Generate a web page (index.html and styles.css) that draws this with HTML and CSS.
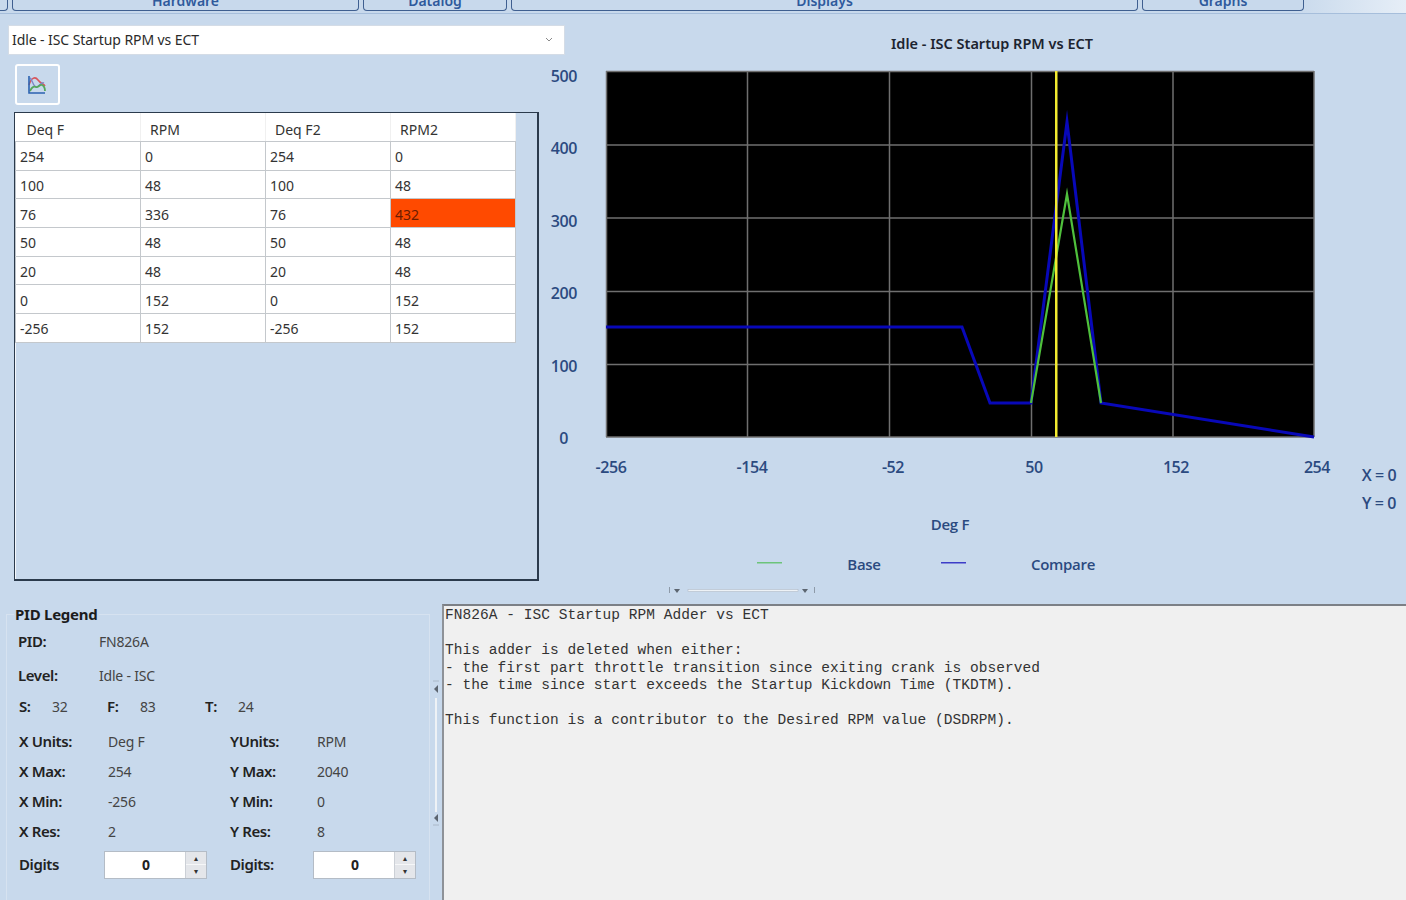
FILE: index.html
```html
<!DOCTYPE html>
<html lang="en">
<head>
    <meta charset="UTF-8">
    <meta name="viewport" content="width=device-width, initial-scale=1.0">
    <title>Idle - ISC Startup RPM vs ECT</title>
    <link rel="stylesheet" href="styles.css">
</head>
<body>
    <div class="tab-strip">
        <div class="tab tab-stub"></div>
        <div class="tab tab-hardware">Hardware</div>
        <div class="tab tab-datalog">Datalog</div>
        <div class="tab tab-displays">Displays</div>
        <div class="tab tab-graphs">Graphs</div>
    </div>

    <div class="top-area">
        <div class="left-col">
            <div class="select-box">
                <span>Idle - ISC Startup RPM vs ECT</span>
                <svg class="select-arrow" width="8" height="5" viewBox="0 0 8 5"><path d="M1 1l3 3 3-3" fill="none" stroke="#8a8a8a"/></svg>
            </div>

            <button class="chart-btn">
                <svg width="20" height="20" viewBox="0 0 20 20">
                    <path d="M2 10C4 3 8 1 11 5s5 3 7 6" fill="none" stroke="#d8565c" stroke-width="1.6"/>
                    <path d="M3 3c2 1 3 8 6 9s5-6 8-4" fill="none" stroke="#7f86c8" stroke-width="1.4"/>
                    <path d="M3 16c2-4 4-5 6-4s4-3 6-2 3 4 3 6" fill="none" stroke="#55a85c" stroke-width="1.8"/>
                    <path d="M2 1v17h16" fill="none" stroke="#2b62b0" stroke-width="1.6"/>
                </svg>
            </button>

            <div class="grid-panel">
                <table class="data-table">
                    <thead>
                        <tr><th>Deq F</th><th>RPM</th><th>Deq F2</th><th>RPM2</th></tr>
                    </thead>
                    <tbody>
                        <tr><td>254</td><td>0</td><td>254</td><td>0</td></tr>
                        <tr><td>100</td><td>48</td><td>100</td><td>48</td></tr>
                        <tr><td>76</td><td>336</td><td>76</td><td class="cell-hot">432</td></tr>
                        <tr><td>50</td><td>48</td><td>50</td><td>48</td></tr>
                        <tr><td>20</td><td>48</td><td>20</td><td>48</td></tr>
                        <tr><td>0</td><td>152</td><td>0</td><td>152</td></tr>
                        <tr><td>-256</td><td>152</td><td>-256</td><td>152</td></tr>
                    </tbody>
                </table>
            </div>
        </div>

        <svg class="chart" width="866" height="590" viewBox="540 14 866 590">
            <text class="chart-title" x="992" y="49" text-anchor="middle" textLength="202" lengthAdjust="spacingAndGlyphs">Idle - ISC Startup RPM vs ECT</text>

            <rect x="606" y="71" width="708" height="366" fill="#000"/>
            <path class="grid-line" d="M606 71.5H1314M606 145H1314M606 218H1314M606 291.500H1314M606 364.500H1314M606 437H1314"/>
            <path class="grid-line" d="M606.500 71V437M747.500 71V437M889.500 71V437M1031.500 71V437M1173 71V437M1314 71V437"/>

            <polyline class="line-compare" points="606,327 962,327 990,403 1031,403 1067,122 1101,403 1314,437"/>
            <path class="line-base" d="M1031 403L1067 194L1101 403"/>
            <rect x="1055" y="71" width="2.500" height="366" fill="#f2ea30"/>

            <text class="axis-label" x="577" y="82" text-anchor="end">500</text>
            <text class="axis-label" x="577" y="154" text-anchor="end">400</text>
            <text class="axis-label" x="577" y="227" text-anchor="end">300</text>
            <text class="axis-label" x="577" y="299" text-anchor="end">200</text>
            <text class="axis-label" x="577" y="372" text-anchor="end">100</text>
            <text class="axis-label" x="568" y="444" text-anchor="end">0</text>

            <text class="axis-label" x="611" y="473" text-anchor="middle">-256</text>
            <text class="axis-label" x="752" y="473" text-anchor="middle">-154</text>
            <text class="axis-label" x="893" y="473" text-anchor="middle">-52</text>
            <text class="axis-label" x="1034" y="473" text-anchor="middle">50</text>
            <text class="axis-label" x="1176" y="473" text-anchor="middle">152</text>
            <text class="axis-label" x="1317" y="473" text-anchor="middle">254</text>

            <text class="axis-label" x="1379" y="481" text-anchor="middle">X = 0</text>
            <text class="axis-label" x="1379" y="509" text-anchor="middle">Y = 0</text>
            <text class="axis-word" x="950" y="530" text-anchor="middle">Deg F</text>

            <rect x="757" y="562" width="25" height="1.500" fill="#6cc47a"/>
            <text class="axis-word" x="864" y="570" text-anchor="middle">Base</text>
            <rect x="941" y="562" width="25" height="1.500" fill="#3d3dc8"/>
            <text class="axis-word" x="1063" y="570" text-anchor="middle">Compare</text>

            <path d="M669.500 587v6M814.500 587v6" stroke="#8e9aa8"/>
            <path d="M674 589h6l-3 4zM802 589h6l-3 4z" fill="#5c6570"/>
            <rect x="688" y="589.500" width="110" height="2" fill="#eef2f6" stroke="#aab4c0" stroke-width="0.500"/>
        </svg>
    </div>

    <div class="bottom-area">
        <fieldset class="legend-box">
            <legend>PID Legend</legend>
            <div class="legend-row row-pid"><b class="lbl-wide">PID:</b><span>FN826A</span></div>
            <div class="legend-row row-level"><b class="lbl-wide">Level:</b><span>Idle - ISC</span></div>
            <div class="legend-row row-sft">
                <b class="lbl-s">S:</b><span class="val-s">32</span>
                <b class="lbl-s">F:</b><span class="val-f">83</span>
                <b class="lbl-s">T:</b><span>24</span>
            </div>
            <div class="legend-row row-stat"><b class="lbl-x">X Units:</b><span class="val-x">Deg F</span><b class="lbl-y">YUnits:</b><span>RPM</span></div>
            <div class="legend-row row-stat"><b class="lbl-x">X Max:</b><span class="val-x">254</span><b class="lbl-y">Y Max:</b><span>2040</span></div>
            <div class="legend-row row-stat"><b class="lbl-x">X Min:</b><span class="val-x">-256</span><b class="lbl-y">Y Min:</b><span>0</span></div>
            <div class="legend-row row-stat"><b class="lbl-x">X Res:</b><span class="val-x">2</span><b class="lbl-y">Y Res:</b><span>8</span></div>
            <div class="legend-row row-digits">
                <b class="lbl-digits">Digits</b>
                <div class="spinner">
                    <span class="spin-value">0</span>
                    <span class="spin-btns"><i>&#9652;</i><i>&#9662;</i></span>
                </div>
                <b class="lbl-digits2">Digits:</b>
                <div class="spinner">
                    <span class="spin-value">0</span>
                    <span class="spin-btns"><i>&#9652;</i><i>&#9662;</i></span>
                </div>
            </div>
        </fieldset>

        <div class="splitter">
            <svg width="8" height="148" viewBox="0 0 8 148">
                <path d="M1 2h6M1 146h6" stroke="#aab8c8" fill="none"/>
                <path d="M6 6v8l-4-4z" fill="#5c6570"/>
                <rect x="3" y="19" width="2" height="114" fill="#eef2f6"/>
                <path d="M6 135v8l-4-4z" fill="#5c6570"/>
            </svg>
        </div>

        <pre class="desc-box">FN826A - ISC Startup RPM Adder vs ECT

This adder is deleted when either:
- the first part throttle transition since exiting crank is observed
- the time since start exceeds the Startup Kickdown Time (TKDTM).

This function is a contributor to the Desired RPM value (DSDRPM).</pre>
    </div>
</body>
</html>
```

FILE: styles.css
```css
:root {
    --panel: #c8d9ec;
    --navy: #2b4a80;
    --text: #333;
}

html, body {
    height: 900px;
    overflow: hidden;
}

body {
    margin: 0;
    background-color: var(--panel);
    font-family: 'Noto Sans', 'Open Sans', sans-serif;
    font-size: 14px;
    color: var(--text);
}

/* tabs, cut off by the top of the window */
.tab-strip {
    display: flex;
    gap: 4px;
    height: 13px;
    overflow: hidden;
    border-bottom: 1px solid #a6bedb;
    background: linear-gradient(to right, #c8d9ec 92%, #e6eef7 100%);
}

.tab {
    height: 11px;
    box-sizing: border-box;
    border: 1px solid #3f5f90;
    border-top: none;
    border-radius: 0 0 4px 4px;
    background: var(--panel);
    color: #2f5a9c;
    font-weight: 600;
    font-size: 14px;
    line-height: 2px;
    text-align: center;
}

.tab-stub { width: 11px; margin-left: -3px; }
.tab-hardware { width: 347px; }
.tab-datalog { width: 144px; }
.tab-displays { width: 627px; }
.tab-graphs { width: 162px; }

.top-area {
    display: flex;
    height: 590px;
}

.left-col {
    width: 540px;
    flex-shrink: 0;
    padding-left: 8px;
    box-sizing: border-box;
}

.select-box {
    display: flex;
    align-items: center;
    justify-content: space-between;
    width: 557px;
    height: 30px;
    margin-top: 11px;
    padding: 0 11px 2px 3px;
    box-sizing: border-box;
    background: white;
    border: 1px solid #d4dce6;
    font-size: 14px;
    letter-spacing: -0.08px;
    color: #2a2a2a;
}

.chart-btn {
    display: flex;
    align-items: center;
    justify-content: center;
    width: 45px;
    height: 41px;
    margin: 9px 0 0 7px;
    padding: 0 2px 0 0;
    background: var(--panel);
    border: 2px solid white;
    border-radius: 3px;
}

.grid-panel {
    width: 525px;
    height: 469px;
    margin: 7px 0 0 6px;
    box-sizing: border-box;
    border: 1px solid #2b3a4c;
    border-right-width: 2px;
    border-bottom-width: 2px;
    box-shadow: inset 1px 0 0 #f4f7fb;
}

.data-table {
    width: 501px;
    border-collapse: collapse;
    table-layout: fixed;
    background: white;
    font-size: 14px;
}

.data-table th {
    height: 24px;
    padding: 4px 0 0 9px;
    font-weight: normal;
    text-align: left;
    border-bottom: 1px solid #c4c8cc;
    border-right: 1px solid #f0f0f0;
    color: #333;
}

.data-table th:first-child {
    padding-left: 11px;
}

.data-table td {
    height: 25.700px;
    padding: 2px 0 0 4px;
    border: 1px solid #c4c8cc;
    border-left-color: #bcc2c8;
}

.cell-hot {
    background: #ff4a00;
    color: #6e1c00;
}

.chart {
    display: block;
    flex-shrink: 0;
}

.chart-title {
    font-family: 'Noto Sans', sans-serif;
    font-size: 15px;
    font-weight: 600;
    fill: #1c2430;
}

.axis-label,
.axis-word {
    font-family: 'Open Sans', sans-serif;
    font-weight: 600;
    fill: var(--navy);
}

.axis-label {
    font-size: 16px;
    letter-spacing: -0.4px;
}

.axis-word {
    font-size: 15px;
    letter-spacing: -0.3px;
}

.grid-line {
    fill: none;
    stroke: #6f6f6f;
    stroke-width: 1.500;
}

.line-base,
.line-compare {
    fill: none;
    stroke-miterlimit: 12;
}

.line-base { stroke: #4fc03c; stroke-width: 2.200; }
.line-compare { stroke: #0808b8; stroke-width: 3; }

.bottom-area {
    display: flex;
    height: 296px;
}

.legend-box {
    width: 424px;
    height: 320px;
    margin: 0 0 0 6px;
    padding: 0;
    box-sizing: border-box;
    flex-shrink: 0;
    border: 1px solid #d6e2f0;
}

.legend-box legend {
    margin-left: 7px;
    padding: 0 1px;
    font-weight: 700;
    font-size: 15px;
    letter-spacing: -0.25px;
    color: #1c1c1c;
    line-height: 20px;
}

.legend-row {
    display: flex;
    align-items: center;
    font-size: 14px;
    color: #444;
    letter-spacing: -0.2px;
}

.legend-row b {
    font-weight: 600;
    font-size: 15px;
    letter-spacing: -0.4px;
    color: #222;
}

.row-pid { height: 20px; margin: 7px 0 0 11px; }
.row-level { height: 20px; margin-top: 14px; margin-left: 11px; }
.row-sft { height: 20px; margin: 11px 0 0 12px; }
.row-stat { height: 20px; margin: 10px 0 0 12px; }
.row-sft + .row-stat { margin-top: 15px; }
.row-digits { height: 28px; margin: 9px 0 0 12px; }

.lbl-wide { width: 81px; }
.lbl-s { width: 33px; }
.val-s { width: 55px; }
.val-f { width: 65px; }
.lbl-x { width: 89px; }
.val-x { width: 122px; }
.lbl-y { width: 87px; }
.lbl-digits { width: 85px; }
.lbl-digits2 { width: 83px; margin-left: 23px; }

.spinner {
    display: flex;
    width: 103px;
    height: 28px;
    margin-top: 1px;
    box-sizing: border-box;
    border: 1px solid #b4bcc6;
    background: white;
}

.spin-value {
    flex: 1;
    padding-left: 2px;
    text-align: center;
    font-weight: 700;
    color: #222;
    line-height: 25px;
}

.spin-btns {
    display: flex;
    flex-direction: column;
    width: 20px;
    background: #e4e6ea;
    border-left: 1px solid #ccd0d6;
}

.spin-btns i {
    flex: 1;
    font-style: normal;
    font-size: 8px;
    line-height: 12px;
    text-align: center;
    color: #333;
}

.spin-btns i + i {
    border-top: 1px solid #f6f7f8;
}

.splitter {
    width: 12px;
    flex-shrink: 0;
    padding: 75px 0 0 2px;
    box-sizing: border-box;
}

.desc-box {
    flex: 1;
    margin: 0;
    padding: 1px 0 0 1px;
    background: #f0f0f0;
    border-left: 2px solid #8e9298;
    border-top: 2px solid #7c8086;
    font-family: 'Liberation Mono', monospace;
    font-size: 14.5px;
    letter-spacing: 0.05px;
    line-height: 17.500px;
    color: #333;
}
```
